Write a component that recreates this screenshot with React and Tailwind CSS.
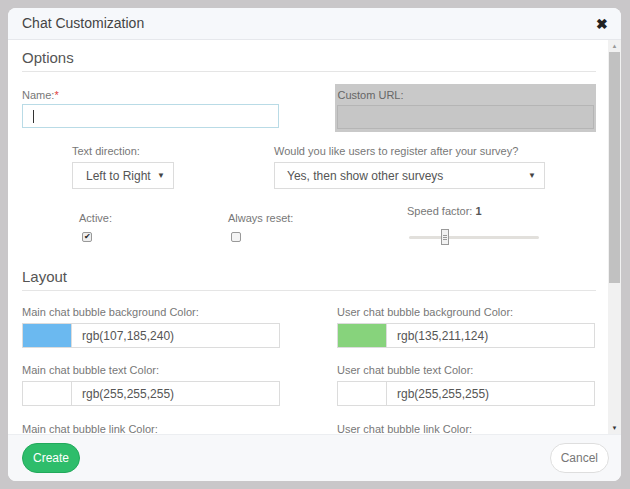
import React from "react";

const ColorField = ({ label, swatch, value }) => (
  <div className="w-[258px]">
    <div className="text-[11px] text-[#777] leading-[14px]">{label}</div>
    <div className="mt-[4px] flex h-[25px] border border-[#dcdcdc] bg-white">
      <div className="w-[49px] h-full border-r border-[#dcdcdc]" style={{ background: swatch }} />
      <div className="pl-[10px] flex items-center text-[12px] text-[#555]">{value}</div>
    </div>
  </div>
);

export default function App() {
  return (
    <div className="w-[630px] h-[489px] bg-[#c9c7c9] pt-[8px] pl-[8px] font-['Liberation_Sans',Arial,sans-serif]">
      <div className="w-[613px] h-[473px] rounded-[8px] overflow-hidden bg-white flex flex-col">
        {/* header */}
        <div className="h-[32px] bg-[#f6f8fb] border-b border-[#e6e8ec] flex items-center justify-between pl-[14px] pr-[13px]">
          <span className="text-[14px] text-[#444]">Chat Customization</span>
          <span className="text-[14px] font-bold text-[#222] leading-none">✖</span>
        </div>

        {/* body */}
        <div className="flex-1 flex overflow-hidden">
          <div className="flex-1 pl-[14px] pr-[12px] pt-[9px] overflow-hidden">
            <div className="text-[15px] text-[#555] leading-[18px]">Options</div>
            <div className="mt-[4px] border-b border-[#e5e5e5]" />

            <div className="mt-[12px] flex gap-[56px]">
              <div className="w-[258px] pt-[4px]">
                <div className="text-[11px] text-[#777] leading-[14px]">
                  Name:<span className="text-[#e04040]">*</span>
                </div>
                <div className="mt-[2px] h-[24px] border border-[#b9dbe6] flex items-center pl-[10px]">
                  <div className="w-px h-[13px] bg-[#333]" />
                </div>
              </div>
              <div className="w-[263px] h-[48px] bg-[#c9c9c9] px-[2px] pt-[4px]">
                <div className="text-[11px] text-[#666] leading-[14px] pl-[1px]">Custom URL:</div>
                <div className="mt-[3px] h-[24px] border border-[#b5b5b5] bg-[#c6c6c6]" />
              </div>
            </div>

            <div className="mt-[12px] flex">
              <div className="ml-[50px] w-[102px]">
                <div className="text-[11px] text-[#777] leading-[14px]">Text direction:</div>
                <div className="mt-[4px] h-[27px] border border-[#dcdcdc] flex items-center justify-between pl-[13px] pr-[8px] text-[12px] text-[#555]">
                  <span>Left to Right</span>
                  <span className="text-[8px] text-[#444]">▼</span>
                </div>
              </div>
              <div className="ml-[100px] w-[271px]">
                <div className="text-[11px] text-[#777] leading-[14px]">Would you like users to register after your survey?</div>
                <div className="mt-[4px] h-[27px] border border-[#dcdcdc] flex items-center justify-between pl-[12px] pr-[8px] text-[12px] text-[#555]">
                  <span>Yes, then show other surveys</span>
                  <span className="text-[8px] text-[#444]">▼</span>
                </div>
              </div>
            </div>

            <div className="mt-[15px] flex">
              <div className="ml-[57px] w-[149px] pt-[7px]">
                <div className="text-[11px] text-[#777] leading-[14px]">Active:</div>
                <div className="mt-[7px] ml-[3px] w-[10px] h-[10px] rounded-[2px] border border-[#999] bg-[#eee] flex items-center justify-center text-[8px] leading-none text-[#222]">✔</div>
              </div>
              <div className="w-[179px] pt-[7px]">
                <div className="text-[11px] text-[#777] leading-[14px]">Always reset:</div>
                <div className="mt-[7px] ml-[3px] w-[10px] h-[10px] rounded-[2px] border border-[#999] bg-[#f4f4f4]" />
              </div>
              <div>
                <div className="text-[11px] text-[#777] leading-[14px]">
                  Speed factor: <span className="font-bold text-[#555]">1</span>
                </div>
                <div className="relative mt-[11px] ml-[2px] w-[130px] h-[16px] flex items-center">
                  <div className="w-full h-[3px] bg-[#e2e0dc] rounded" />
                  <div className="absolute left-[32px] top-0 w-[8px] h-[16px] border border-[#999] bg-[#f2f2f2] flex flex-col items-center justify-center gap-[1px]">
                    <div className="w-[4px] h-px bg-[#999]" />
                    <div className="w-[4px] h-px bg-[#999]" />
                    <div className="w-[4px] h-px bg-[#999]" />
                  </div>
                </div>
              </div>
            </div>

            <div className="mt-[23px] text-[15px] text-[#555] leading-[18px]">Layout</div>
            <div className="mt-[4px] border-b border-[#e5e5e5]" />

            <div className="mt-[14px] flex gap-[57px]">
              <ColorField label="Main chat bubble background Color:" swatch="#6bb9f0" value="rgb(107,185,240)" />
              <ColorField label="User chat bubble background Color:" swatch="#87d37c" value="rgb(135,211,124)" />
            </div>
            <div className="mt-[15px] flex gap-[57px]">
              <ColorField label="Main chat bubble text Color:" swatch="#ffffff" value="rgb(255,255,255)" />
              <ColorField label="User chat bubble text Color:" swatch="#ffffff" value="rgb(255,255,255)" />
            </div>
            <div className="mt-[16px] flex gap-[57px]">
              <div className="w-[258px] text-[11px] text-[#777] leading-[14px]">Main chat bubble link Color:</div>
              <div className="w-[258px] text-[11px] text-[#777] leading-[14px]">User chat bubble link Color:</div>
            </div>
          </div>

          {/* scrollbar */}
          <div className="w-[13px] bg-[#f1f1f1] flex flex-col items-center">
            <div className="h-[12px] flex items-center text-[6px] text-[#999]">▲</div>
            <div className="w-[11px] h-[231px] bg-[#c1c1c1]" />
            <div className="flex-1" />
            <div className="h-[12px] flex items-center text-[6px] text-[#333]">▼</div>
          </div>
        </div>

        {/* footer */}
        <div className="h-[47px] bg-[#f7f8fa] border-t border-[#eceef1] flex items-center justify-between pl-[14px] pr-[12px]">
          <button className="h-[30px] px-[10px] rounded-full bg-[#2ebd6b] border border-[#22a95b] text-[12px] text-white">Create</button>
          <button className="h-[30px] px-[10px] rounded-full bg-white border border-[#dedede] text-[12px] text-[#777]">Cancel</button>
        </div>
      </div>
    </div>
  );
}
